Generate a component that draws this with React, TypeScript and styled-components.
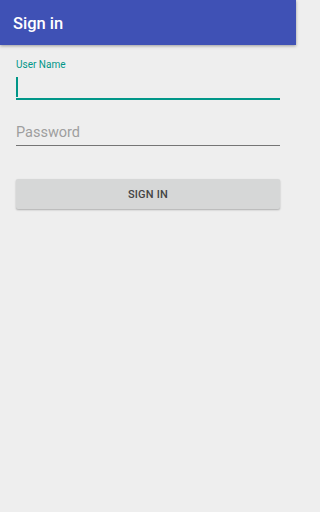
import React from 'react';
import styled, { createGlobalStyle } from 'styled-components';

const GlobalStyle = createGlobalStyle`
  html, body {
    margin: 0;
    padding: 0;
    background: #eeeeee;
    font-family: Roboto, "Noto Sans", "Liberation Sans", sans-serif;
  }
  * {
    box-sizing: border-box;
  }
`;

const Screen = styled.div`
  max-width: 296px;
  min-height: 512px;
  background: #eeeeee;
  display: flex;
  flex-direction: column;
`;

const AppBar = styled.header`
  height: 45px;
  background: #3f51b5;
  display: flex;
  align-items: center;
  padding: 2px 0 0 13px;
  box-shadow: 0 1px 3px rgba(0, 0, 0, 0.35);
  position: relative;
  z-index: 1;
`;

const Title = styled.h1`
  margin: 0;
  font-size: 16.5px;
  font-weight: 500;
  color: #ffffff;
  line-height: 20px;
`;

const Form = styled.form`
  display: flex;
  flex-direction: column;
  padding: 13.5px 16px 0;
`;

const FloatLabel = styled.label`
  display: block;
  font-size: 10px;
  line-height: 12px;
  color: #009688;
`;

const FieldRow = styled.div<{ $focused?: boolean }>`
  display: flex;
  align-items: flex-end;
  border-bottom: ${p => (p.$focused ? '2px solid #009688' : '1px solid #757575')};
`;

const Caret = styled.span`
  width: 2px;
  height: 20px;
  background: #009688;
  margin-bottom: 1px;
  flex-shrink: 0;
`;

const TextInput = styled.input`
  flex: 1;
  min-width: 0;
  border: none;
  outline: none;
  background: transparent;
  font-family: inherit;
  font-size: 14.5px;
  line-height: 16px;
  height: 16px;
  padding: 0;
  margin: 0 0 4px;
  color: #212121;

  &::placeholder {
    color: #9e9e9e;
  }
`;

const UserField = styled.div`
  display: flex;
  flex-direction: column;
`;

const UserRow = styled(FieldRow)`
  height: 29.5px;
`;

const PasswordField = styled.div`
  margin-top: 25px;
`;

const SubmitButton = styled.button`
  margin-top: 33px;
  height: 30px;
  border: none;
  border-radius: 2px;
  background: #d6d7d7;
  box-shadow: 0 1px 2px rgba(0, 0, 0, 0.28);
  font-family: inherit;
  font-size: 11px;
  font-weight: 500;
  letter-spacing: 0.2px;
  color: #444444;
  text-transform: uppercase;
  padding: 0;
  cursor: pointer;
`;

const App: React.FC = () => {
  return (
    <Screen>
      <GlobalStyle />
      <AppBar>
        <Title>Sign in</Title>
      </AppBar>
      <Form onSubmit={e => e.preventDefault()}>
        <UserField>
          <FloatLabel htmlFor="username">User Name</FloatLabel>
          <UserRow $focused>
            <Caret />
            <TextInput id="username" type="text" />
          </UserRow>
        </UserField>
        <PasswordField>
          <FieldRow>
            <TextInput id="password" type="password" placeholder="Password" />
          </FieldRow>
        </PasswordField>
        <SubmitButton type="submit">Sign in</SubmitButton>
      </Form>
    </Screen>
  );
};

export default App;
